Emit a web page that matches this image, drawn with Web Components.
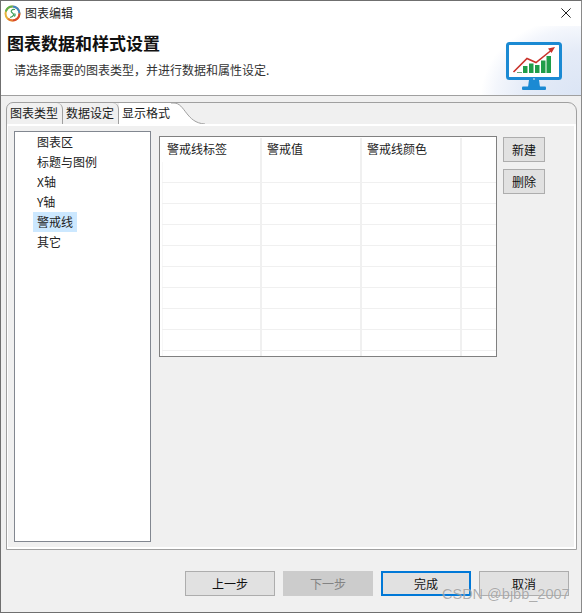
<!DOCTYPE html>
<html>
<head>
<meta charset="utf-8">
<title>图表编辑</title>
<style>
    html, body { margin: 0; padding: 0; background: #fff; }
    body { font-family: "Noto Sans CJK SC", "Liberation Sans", sans-serif; font-size: 12px; color: #1a1a1a; }
</style>
</head>
<body>
<chart-dialog>
    <chart-titlebar slot="title">图表编辑</chart-titlebar>
    <chart-banner slot="banner" heading="图表数据和样式设置" note="请选择需要的图表类型，并进行数据和属性设定."></chart-banner>
    <chart-tabs slot="tabs">
        <format-list></format-list>
        <warn-table></warn-table>
        <div style="display:flex;flex-direction:column;gap:7px;margin-top:6px">
            <wiz-button small>新建</wiz-button>
            <wiz-button small>删除</wiz-button>
        </div>
    </chart-tabs>
    <wiz-button slot="footer">上一步</wiz-button>
    <wiz-button slot="footer" disabled>下一步</wiz-button>
    <wiz-button slot="footer" focused>完成</wiz-button>
    <wiz-button slot="footer">取消</wiz-button>
</chart-dialog>

<script>
class ChartDialog extends HTMLElement {
    constructor() {
        super();
        this.attachShadow({ mode: 'open' });
    }

    connectedCallback() {
        this.shadowRoot.innerHTML = `
        <style>
            :host {
                display: flex;
                flex-direction: column;
                position: relative;
                box-sizing: border-box;
                width: 582px;
                height: 613px;
                border: 1px solid #6f6f6f;
                border-right-color: #8a8a8a;
                background: #f0f0f0;
                overflow: hidden;
            }
            .body { flex: 1; padding: 6px 4px 0 5px; border-top: 1px solid #a0a0a0; }
            .footer { display: flex; justify-content: flex-end; gap: 8px; padding: 21px 8px 0 0; }
            .mark {
                position: absolute;
                left: 441px;
                top: 585px;
                font: 14.5px "Liberation Sans", sans-serif;
                color: rgba(120, 120, 120, 0.6);
                text-shadow: 0 0 1px rgba(255, 255, 255, 0.7);
                white-space: nowrap;
            }
        </style>
        <slot name="title"></slot>
        <slot name="banner"></slot>
        <div class="body">
            <slot name="tabs"></slot>
            <div class="footer"><slot name="footer"></slot></div>
        </div>
        <div class="mark">CSDN @bjbb_2007</div>
        `;
    }
}

class ChartTitlebar extends HTMLElement {
    constructor() {
        super();
        this.attachShadow({ mode: 'open' });
    }

    connectedCallback() {
        this.shadowRoot.innerHTML = `
        <style>
            :host {
                display: flex;
                align-items: center;
                height: 25px;
                padding: 0 10px 0 3px;
                background: #fff;
                font-size: 12px;
                color: #222;
            }
            .logo { width: 17px; height: 17px; margin-right: 4px; }
            .text { flex: 1; padding-bottom: 2px; }
            .close { width: 10px; height: 10px; margin-bottom: 1px; }
        </style>
        <svg class="logo" viewBox="0 0 17 17">
            <circle cx="8.5" cy="8.5" r="7" fill="#fff" stroke="#e8b23a" stroke-width="2"/>
            <path d="M8.5 1.5a7 7 0 0 1 7 7" fill="none" stroke="#3f86c8" stroke-width="2"/>
            <path d="M15.5 8.5a7 7 0 0 1-7 7" fill="none" stroke="#d9482f" stroke-width="2"/>
            <path d="M8.5 15.5a7 7 0 0 1-4.5-1.7" fill="none" stroke="#e8792f" stroke-width="2"/>
            <path d="M1.8 6.5a7 7 0 0 1 6.7-5" fill="none" stroke="#5cb04f" stroke-width="2"/>
            <path d="M11 4.500C7.500 4 6 6.500 8.500 8c2 1.200 1.500 3.500-2.500 4.500M10.500 8.500c1 .8.8 2-.2 3" fill="none" stroke="#3e9f5c" stroke-width="1.200"/>
        </svg>
        <span class="text"><slot></slot></span>
        <svg class="close" viewBox="0 0 10 10"><path d="M.4.4l9.2 9.2M9.6.4L.4 9.6" stroke="#222" stroke-width="1" fill="none"/></svg>
        `;
    }
}

class ChartBanner extends HTMLElement {
    constructor() {
        super();
        this.attachShadow({ mode: 'open' });
    }

    connectedCallback() {
        this.shadowRoot.innerHTML = `
        <style>
            :host {
                display: flex;
                box-sizing: border-box;
                height: 69px;
                background:
                    radial-gradient(ellipse 100px 78px at 100% 100%, #dbe5f5 0%, #e4ebf7 55%, #f3f6fc 85%, #ffffff 100%);
            }
            .copy { flex: 1; padding: 5px 0 0 6px; }
            h1 { margin: 0; font-size: 17px; line-height: 24px; font-weight: 700; color: #111; }
            p { margin: 6px 0 0 7px; font-size: 12px; line-height: 18px; color: #333; }
            svg { width: 58px; height: 50px; margin: 15px 18px 0 0; }
        </style>
        <div class="copy">
            <h1>${this.getAttribute('heading')}</h1>
            <p>${this.getAttribute('note')}</p>
        </div>
        <svg viewBox="505 41 58 50">
            <rect x="507.500" y="43.500" width="53" height="35" rx="2" fill="#fff" stroke="#1b8ad3" stroke-width="3"/>
            <path d="M529 80h10l1 7h-12z" fill="#1b8ad3"/>
            <rect x="522" y="86.500" width="24" height="3.500" rx="1" fill="#1b8ad3"/>
            <circle cx="534" cy="79" r=".8" fill="#fff"/>
            <rect x="517" y="72" width="5" height="1" fill="#6aa87c"/>
            <rect x="523" y="66" width="4.500" height="7" fill="#1f9d49"/>
            <rect x="529" y="63.500" width="4.500" height="9.500" fill="#1f9d49"/>
            <rect x="535" y="65" width="4.500" height="8" fill="#1f9d49"/>
            <rect x="541" y="60.500" width="4.500" height="12.500" fill="#1f9d49"/>
            <rect x="546.500" y="56" width="4.500" height="17" fill="#1f9d49"/>
            <path d="M513.500 72L527 58.500l9 4 15-12" fill="none" stroke="#c9332b" stroke-width="1.600"/>
            <path d="M555 47l-7 1.500 3.500 4.500z" fill="#c9332b"/>
        </svg>
        `;
    }
}

class ChartTabs extends HTMLElement {
    constructor() {
        super();
        this.attachShadow({ mode: 'open' });
    }

    connectedCallback() {
        this.shadowRoot.innerHTML = `
        <style>
            :host {
                display: flex;
                flex-direction: column;
                box-sizing: border-box;
                height: 448px;
                border: 1px solid #a0a0a0;
                border-radius: 7px 9px 0 0;
            }
            .strip { display: flex; height: 21px; font-size: 12px; color: #1a1a1a; }
            .tab {
                box-sizing: border-box;
                width: 56px;
                padding: 0 0 0 3px;
                line-height: 20px;
                border-right: 1px solid #a0a0a0;
                border-radius: 0 6px 0 0;
            }
            .active { display: flex; height: 22px; }
            .active span { width: 49px; padding-left: 3px; background: #fff; line-height: 20px; }
            .active svg { width: 34px; height: 22px; display: block; }
            .panel {
                flex: 1;
                display: flex;
                box-sizing: border-box;
                padding: 5px 6px 5px 6px;
                border: solid #fff;
                border-width: 2px 2px 2px 1px;
            }
        </style>
        <div class="strip">
            <div class="tab">图表类型</div>
            <div class="tab">数据设定</div>
            <div class="active">
                <span>显示格式</span>
                <svg viewBox="0 0 34 22">
                    <path d="M0 0H3C14 0 15 20 34 21V22H0Z" fill="#fff"/>
                    <path d="M0 0H3C14 0 15 20 34 21" fill="none" stroke="#a0a0a0"/>
                </svg>
            </div>
        </div>
        <div class="panel"><slot></slot></div>
        `;
    }
}

class FormatList extends HTMLElement {
    constructor() {
        super();
        this.attachShadow({ mode: 'open' });
    }

    connectedCallback() {
        const items = ['图表区', '标题与图例', 'X轴', 'Y轴', '警戒线', '其它'];
        this.shadowRoot.innerHTML = `
        <style>
            :host {
                display: block;
                box-sizing: border-box;
                width: 137px;
                height: 411px;
                margin-right: 8px;
                padding: 0 0 0 18px;
                background: #fff;
                border: 1px solid #828790;
                font-size: 12px;
                color: #222;
            }
            div { width: fit-content; height: 20px; line-height: 20px; padding: 0 4px; }
            .sel { background: #cce8ff; min-width: 36px; }
        </style>
        ${items.map(t => `<div class="${t === '警戒线' ? 'sel' : ''}">${t}</div>`).join('')}
        `;
    }
}

class WarnTable extends HTMLElement {
    constructor() {
        super();
        this.attachShadow({ mode: 'open' });
    }

    connectedCallback() {
        const row = '<div class="row"><i></i><i></i><i></i><i></i></div>';
        this.shadowRoot.innerHTML = `
        <style>
            :host {
                display: block;
                box-sizing: border-box;
                width: 338px;
                height: 221px;
                margin: 5px 6px 0 0;
                background: #fff;
                border: 1px solid #808080;
                font-size: 12px;
                color: #222;
            }
            .head { display: grid; grid-template-columns: 102px 100px 100px 1fr; height: 25px; padding-top: 1px; box-sizing: border-box; }
            .head span { padding-left: 5px; line-height: 22px; border-right: 2px solid #f0f0f0; box-sizing: border-box; }
            .head span:first-child { padding-left: 7px; }
            .head span:last-child { border: 0; }
            .row { display: grid; grid-template-columns: 100px 100px 100px 1fr; height: 21px; box-sizing: border-box; border-bottom: 1px solid #f0f0f0; margin-left: 2px; }
            .row i { border-right: 2px solid #f0f0f0; box-sizing: border-box; }
            .row i:first-child { border-left: 1px solid #f7f7f7; }
            .row i:last-child { border: 0; }
            .last { height: 5px; border-bottom: 0; }
        </style>
        <div class="head"><span>警戒线标签</span><span>警戒值</span><span>警戒线颜色</span><span></span></div>
        ${row.repeat(9)}
        <div class="row last"><i></i><i></i><i></i><i></i></div>
        `;
    }
}

class WizButton extends HTMLElement {
    constructor() {
        super();
        this.attachShadow({ mode: 'open' });
    }

    connectedCallback() {
        this.shadowRoot.innerHTML = `
        <style>
            :host {
                display: flex;
                align-items: center;
                justify-content: center;
                box-sizing: border-box;
                width: 90px;
                height: 25px;
                background: #e1e1e1;
                border: 1px solid #adadad;
                font-size: 12px;
                color: #111;
            }
            :host([small]) { width: 42px; }
            :host([disabled]) { background: #cccccc; border-color: #cccccc; color: #838383; }
            :host([focused]) { border: 2px solid #0078d7; }
        </style>
        <slot></slot>
        `;
    }
}

customElements.define('chart-dialog', ChartDialog);
customElements.define('chart-titlebar', ChartTitlebar);
customElements.define('chart-banner', ChartBanner);
customElements.define('chart-tabs', ChartTabs);
customElements.define('format-list', FormatList);
customElements.define('warn-table', WarnTable);
customElements.define('wiz-button', WizButton);
</script>
</body>
</html>
